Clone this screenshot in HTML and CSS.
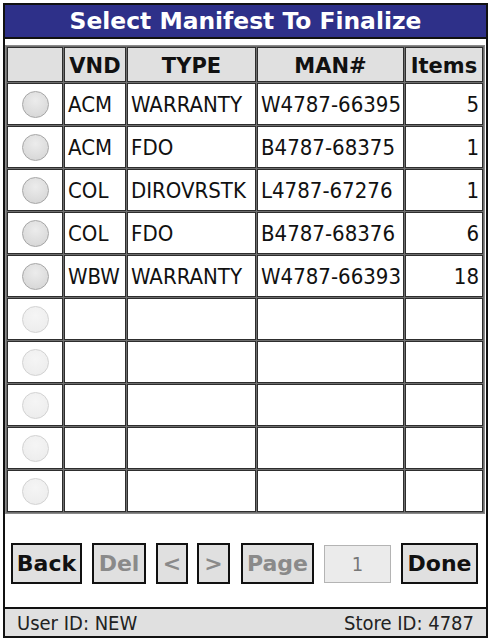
FILE: index.html
```html
<!DOCTYPE html>
<html>
<head>
<meta charset="utf-8">
<link rel="stylesheet" href="styles.css">
</head>
<body>
<div class="frame">
  <div class="title">Select Manifest To Finalize</div>
  <table class="grid">
    <colgroup>
      <col class="c-sel"><col class="c-vnd"><col class="c-type"><col class="c-man"><col class="c-items">
    </colgroup>
    <thead>
      <tr class="head">
        <th></th><th>VND</th><th>TYPE</th><th>MAN#</th><th>Items</th>
      </tr>
    </thead>
    <tbody>
      <tr><td class="sel"><input type="radio" name="m" class="radio"></td><td>ACM</td><td>WARRANTY</td><td>W4787-66395</td><td class="num">5</td></tr>
      <tr><td class="sel"><input type="radio" name="m" class="radio"></td><td>ACM</td><td>FDO</td><td>B4787-68375</td><td class="num">1</td></tr>
      <tr><td class="sel"><input type="radio" name="m" class="radio"></td><td>COL</td><td>DIROVRSTK</td><td>L4787-67276</td><td class="num">1</td></tr>
      <tr><td class="sel"><input type="radio" name="m" class="radio"></td><td>COL</td><td>FDO</td><td>B4787-68376</td><td class="num">6</td></tr>
      <tr><td class="sel"><input type="radio" name="m" class="radio"></td><td>WBW</td><td>WARRANTY</td><td>W4787-66393</td><td class="num">18</td></tr>
      <tr><td class="sel"><input type="radio" name="m" class="radio" disabled></td><td></td><td></td><td></td><td></td></tr>
      <tr><td class="sel"><input type="radio" name="m" class="radio" disabled></td><td></td><td></td><td></td><td></td></tr>
      <tr><td class="sel"><input type="radio" name="m" class="radio" disabled></td><td></td><td></td><td></td><td></td></tr>
      <tr><td class="sel"><input type="radio" name="m" class="radio" disabled></td><td></td><td></td><td></td><td></td></tr>
      <tr><td class="sel"><input type="radio" name="m" class="radio" disabled></td><td></td><td></td><td></td><td></td></tr>
    </tbody>
  </table>
  <div class="actions">
    <button class="btn w-back">Back</button>
    <button class="btn w-del" disabled>Del</button>
    <button class="btn w-arrow" disabled>&lt;</button>
    <button class="btn w-arrow2" disabled>&gt;</button>
    <button class="btn w-page" disabled>Page</button>
    <input class="pagebox" type="text" value="1" disabled>
    <button class="btn w-done">Done</button>
  </div>
  <div class="status">
    <span>User ID: NEW</span>
    <span>Store ID: 4787</span>
  </div>
</div>
</body>
</html>
```
FILE: styles.css
```css
html, body {
  margin: 0;
  padding: 0;
  background: #ffffff;
}
body {
  width: 492px;
  height: 640px;
  font-family: "DejaVu Sans Condensed", "DejaVu Sans", sans-serif;
  font-stretch: condensed;
  color: #111;
}
.frame {
  box-sizing: border-box;
  margin: 3px 0 0 3px;
  width: 485px;
  height: 635px;
  border: 2px solid #111;
  display: flex;
  flex-direction: column;
}
.title {
  height: 32px;
  line-height: 33px;
  background: #2e3089;
  color: #ffffff;
  text-align: center;
  font-family: "DejaVu Sans", sans-serif;
  font-stretch: normal;
  font-weight: bold;
  font-size: 23.4px;
  border-bottom: 2px solid #111;
}
.grid {
  margin-top: 6px;
  width: 480px;
  table-layout: fixed;
  border-collapse: separate;
  border-spacing: 1px;
  background: #6e6e6e;
  border: 1px solid #8a8a8a;
}
.c-sel { width: 56px; }
.c-vnd { width: 62px; }
.c-type { width: 129px; }
.c-man { width: 147px; }
.c-items { width: 78px; }
.grid th, .grid td {
  border: 1px solid #2e2e2e;
  padding: 0 3px;
  overflow: hidden;
  white-space: nowrap;
}
.head { height: 35px; }
.grid th {
  background: #e0e0e0;
  font-family: "DejaVu Sans", sans-serif;
  font-stretch: normal;
  font-weight: bold;
  font-size: 21px;
  text-align: center;
  color: #111;
  padding-top: 2px;
}
.grid tbody tr { height: 42px; }
.grid td {
  background: #ffffff;
  font-size: 22px;
  text-align: left;
}
.grid td.num { text-align: right; }
.grid td.sel {
  text-align: center;
  padding: 0;
}
.radio {
  appearance: none;
  -webkit-appearance: none;
  display: block;
  margin: 0 auto;
  width: 27px;
  height: 27px;
  border-radius: 50%;
  border: 1px solid #a6a6a6;
  background: radial-gradient(circle at 50% 35%, #ececec 0%, #dddddd 60%, #d2d2d2 100%);
  box-sizing: border-box;
}
.radio:disabled {
  border-color: #d2d2d2;
  background: radial-gradient(circle at 50% 35%, #f5f5f5 0%, #eeeeee 70%, #e8e8e8 100%);
}
.actions {
  margin-top: 29px;
  padding-left: 6px;
  display: flex;
  align-items: center;
  gap: 10px;
}
.btn {
  box-sizing: border-box;
  height: 41px;
  margin: 0;
  padding: 0;
  border: 2px solid #111;
  background: #e0e0e0;
  color: #111;
  font-family: "DejaVu Sans", sans-serif;
  font-stretch: normal;
  font-weight: bold;
  font-size: 22px;
  border-radius: 0;
}
.btn:disabled { color: #8a8a8a; }
.w-back { width: 71px; }
.w-del { width: 54px; }
.w-arrow { width: 32px; }
.w-arrow2 { width: 33px; margin-left: -1px; }
.w-page { width: 73px; margin-left: 1px; }
.w-done { width: 77px; }
.pagebox {
  box-sizing: border-box;
  width: 67px;
  height: 38px;
  margin: 0;
  padding: 0;
  border: 1px solid #b4b4b4;
  background: #ebebeb;
  color: #777;
  text-align: center;
  font-family: "DejaVu Sans Condensed", "DejaVu Sans", sans-serif;
  font-stretch: condensed;
  font-size: 20px;
}
.status {
  margin-top: auto;
  height: 27px;
  border-top: 2px solid #111;
  background: #e0e0e0;
  display: flex;
  justify-content: space-between;
  align-items: center;
  padding: 0 12px 0 12px;
  font-size: 20px;
  color: #222;
}
```
